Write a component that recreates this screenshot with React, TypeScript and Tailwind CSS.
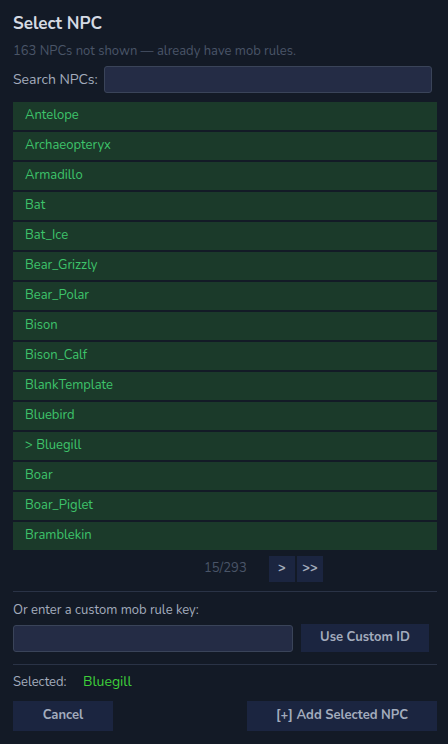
import { useState } from "react";

const NPCS = [
  "Antelope",
  "Archaeopteryx",
  "Armadillo",
  "Bat",
  "Bat_Ice",
  "Bear_Grizzly",
  "Bear_Polar",
  "Bison",
  "Bison_Calf",
  "BlankTemplate",
  "Bluebird",
  "Bluegill",
  "Boar",
  "Boar_Piglet",
  "Bramblekin",
];

export default function App() {
  const [selected, setSelected] = useState("Bluegill");
  const [search, setSearch] = useState("");
  const [custom, setCustom] = useState("");

  return (
    <div
      className="w-[448px] h-[744px] bg-[#131a26] pl-[13px] pr-[11px] pt-[12px] text-[#a3acbd] overflow-hidden"
      style={{ fontFamily: "Nunito, 'Noto Sans', Lato, sans-serif" }}
    >
      <h2 className="text-[17px] leading-[24px] font-bold text-[#d5dae3]">Select NPC</h2>
      <p className="mt-[7px] text-[13px] leading-[16px] text-[#4a5568]">
        163 NPCs not shown — already have mob rules.
      </p>

      <div className="mt-[7px] flex items-center gap-[6px]">
        <label className="text-[14px] text-[#a3acbd] whitespace-nowrap">Search NPCs:</label>
        <input
          value={search}
          onChange={(e) => setSearch(e.target.value)}
          className="h-[27px] flex-1 mr-[5px] rounded-[3px] bg-[#242c45] border border-[#3a4459] outline-none px-2 text-[13px] text-[#d5dae3]"
        />
      </div>

      <div className="mt-[9px] flex flex-col gap-[2px]">
        {NPCS.map((n) => (
          <button
            key={n}
            onClick={() => setSelected(n)}
            className="h-[28px] bg-[#1b3a2a] text-left pl-[12px] text-[13px] text-[#3ec46a]"
          >
            {n === selected ? "> " + n : n}
          </button>
        ))}
      </div>

      <div className="mt-[6px] flex items-center pl-[191px]">
        <span className="text-[13px] text-[#4a5568] w-[65px]">15/293</span>
        <button className="w-[26px] h-[26px] bg-[#1b2540] text-[13px] font-bold text-[#a3acbd]">&gt;</button>
        <button className="ml-[2px] w-[26px] h-[26px] bg-[#1b2540] text-[13px] font-bold text-[#a3acbd]">
          &gt;&gt;
        </button>
      </div>

      <div className="mt-[9px] border-t border-[#2a3346]" />

      <p className="mt-[9px] text-[13px] leading-[18px] text-[#a3acbd]">Or enter a custom mob rule key:</p>
      <div className="mt-[5px] flex items-center">
        <input
          value={custom}
          onChange={(e) => setCustom(e.target.value)}
          className="h-[27px] w-[280px] rounded-[3px] bg-[#242c45] border border-[#3a4459] outline-none px-2 text-[13px] text-[#d5dae3]"
        />
        <button className="ml-[8px] w-[128px] h-[28px] bg-[#1b2540] text-[13px] font-bold text-[#a3acbd]">
          Use Custom ID
        </button>
      </div>

      <div className="mt-[12px] border-t border-[#2a3346]" />

      <div className="mt-[8px] flex items-center leading-[18px]">
        <span className="text-[13px] text-[#a3acbd] w-[70px]">Selected:</span>
        <span className="text-[14px] text-[#3ecf3a]">{selected}</span>
      </div>

      <div className="mt-[10px] flex justify-between">
        <button className="w-[100px] h-[30px] bg-[#1b2540] text-[13px] font-bold text-[#a3acbd]">Cancel</button>
        <button className="w-[190px] h-[30px] bg-[#1b2540] text-[13px] font-bold text-[#a3acbd]">
          [+] Add Selected NPC
        </button>
      </div>
    </div>
  );
}
